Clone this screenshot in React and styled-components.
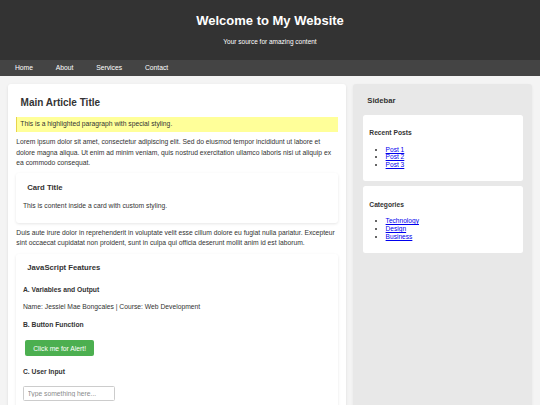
import React, { useState } from "react";
import styled, { createGlobalStyle } from "styled-components";

const GlobalStyle = createGlobalStyle`
  * { box-sizing: border-box; }
  body {
    margin: 0;
    background: #f4f4f4;
    color: #333;
    font-family: "Liberation Sans", Arial, sans-serif;
    font-size: 6.75px;
    line-height: 10.4px;
  }
`;

const Header = styled.header`
  background: #333;
  color: #fff;
  text-align: center;
  padding: 13px 0 13.5px;
`;

const SiteTitle = styled.h1`
  margin: 0;
  font-size: 13px;
  line-height: 15px;
  font-weight: bold;
`;

const Tagline = styled.p`
  margin: 10px 0 0;
  font-size: 6.5px;
  line-height: 8px;
`;

const Nav = styled.nav`
  display: flex;
  align-items: center;
  height: 16.5px;
  padding: 0 3.6px;
  background: #444;
`;

const NavLink = styled.a`
  color: #fff;
  text-decoration: none;
  padding: 0 11.4px;
  line-height: 16.5px;
`;

const Layout = styled.div`
  display: grid;
  grid-template-columns: 1fr 179px;
  gap: 7px;
  padding: 8px;
`;

const Article = styled.main`
  background: #fff;
  border-radius: 3px;
  padding: 8.3px;
  box-shadow: 0 1px 3px rgba(0, 0, 0, 0.1);
`;

const ArticleTitle = styled.h2`
  margin: 4.9px 0 8.7px;
  padding-left: 4.3px;
  font-size: 10px;
  line-height: 11px;
`;

const Highlight = styled.p`
  margin: 0;
  padding: 2.4px 4px 2.6px 3px;
  background: #ffff99;
  border-left: 1.3px solid #e8d44d;
`;

const Text = styled.p`
  margin: ${(p) => (p.$lead ? "5.2px" : "4.5px")} 0 4.5px;
`;

const Card = styled.section`
  background: #fff;
  border-radius: 3px;
  padding: 6.5px 6.7px;
  margin: 4.8px 0 5.4px;
  box-shadow: 0 1px 3px rgba(0, 0, 0, 0.1);
`;

const CardTitle = styled.h3`
  margin: 4px 0 ${(p) => (p.$spaced ? "13.1px" : "8.6px")};
  padding-left: 4.3px;
  font-size: 7.7px;
  line-height: 8.7px;
`;

const SubTitle = styled.h4`
  margin: 8.8px 0;
  font-size: 6.75px;
  line-height: 7.5px;
`;

const Button = styled.button`
  display: block;
  margin: 11.5px 2px;
  padding: 4.1px 8.2px;
  border: none;
  border-radius: 2px;
  background: #4caf50;
  color: #fff;
  font-family: inherit;
  font-size: 6.75px;
  line-height: 7.5px;
  cursor: pointer;
`;

const Input = styled.input`
  display: block;
  width: 91.7px;
  height: 15px;
  margin: 11.2px 0;
  padding: 0 3.6px;
  border: 0.7px solid #ccc;
  border-radius: 1.5px;
  font-family: inherit;
  font-size: 6.75px;
  color: #333;

  &::placeholder {
    color: #8a8a8a;
  }
`;

const Sidebar = styled.aside`
  background: #e8e8e8;
  border-radius: 3px;
  padding: 9.5px 9px 9.5px 10px;
  box-shadow: 0 1px 3px rgba(0, 0, 0, 0.06);
`;

const SidebarTitle = styled.h3`
  margin: 3.6px 0 8.8px;
  padding-left: 4.3px;
  font-size: 7.7px;
  line-height: 8.7px;
`;

const Widget = styled.div`
  background: #fff;
  border-radius: 2.5px;
  padding: 6.3px;
  & + & {
    margin-top: 5px;
  }
`;

const WidgetTitle = styled.h4`
  margin: 8.6px 0;
  font-size: 6.7px;
  line-height: 7.5px;
`;

const LinkList = styled.ul`
  margin: 6.5px 0;
  padding-left: 16.3px;
  font-size: 6.6px;
  line-height: 7.7px;
`;

const ListLink = styled.a`
  color: #0000ee;
  text-decoration: underline;
`;

const widgets = [
  { title: "Recent Posts", links: ["Post 1", "Post 2", "Post 3"] },
  { title: "Categories", links: ["Technology", "Design", "Business"] },
];

export default function App() {
  const [typed, setTyped] = useState("");
  const student = { name: "Jessiel Mae Bongcales", course: "Web Development" };

  return (
    <>
      <GlobalStyle />
      <Header>
        <SiteTitle>Welcome to My Website</SiteTitle>
        <Tagline>Your source for amazing content</Tagline>
      </Header>
      <Nav>
        {["Home", "About", "Services", "Contact"].map((item) => (
          <NavLink key={item} href="#">
            {item}
          </NavLink>
        ))}
      </Nav>
      <Layout>
        <Article>
          <ArticleTitle>Main Article Title</ArticleTitle>
          <Highlight>This is a highlighted paragraph with special styling.</Highlight>
          <Text $lead>
            Lorem ipsum dolor sit amet, consectetur adipiscing elit. Sed do eiusmod tempor
            incididunt ut labore et dolore magna aliqua. Ut enim ad minim veniam, quis nostrud
            exercitation ullamco laboris nisi ut aliquip ex ea commodo consequat.
          </Text>
          <Card>
            <CardTitle>Card Title</CardTitle>
            <Text>This is content inside a card with custom styling.</Text>
          </Card>
          <Text>
            Duis aute irure dolor in reprehenderit in voluptate velit esse cillum dolore eu fugiat
            nulla pariatur. Excepteur sint occaecat cupidatat non proident, sunt in culpa qui
            officia deserunt mollit anim id est laborum.
          </Text>
          <Card>
            <CardTitle $spaced>JavaScript Features</CardTitle>
            <SubTitle>A. Variables and Output</SubTitle>
            <Text>
              Name: {student.name} | Course: {student.course}
            </Text>
            <SubTitle>B. Button Function</SubTitle>
            <Button onClick={() => alert("Hello! This is an alert.")}>Click me for Alert!</Button>
            <SubTitle>C. User Input</SubTitle>
            <Input
              placeholder="Type something here..."
              value={typed}
              onChange={(e) => setTyped(e.target.value)}
            />
            <Text>You typed: {typed}</Text>
          </Card>
        </Article>
        <Sidebar>
          <SidebarTitle>Sidebar</SidebarTitle>
          {widgets.map((w) => (
            <Widget key={w.title}>
              <WidgetTitle>{w.title}</WidgetTitle>
              <LinkList>
                {w.links.map((l) => (
                  <li key={l}>
                    <ListLink href="#">{l}</ListLink>
                  </li>
                ))}
              </LinkList>
            </Widget>
          ))}
        </Sidebar>
      </Layout>
    </>
  );
}
